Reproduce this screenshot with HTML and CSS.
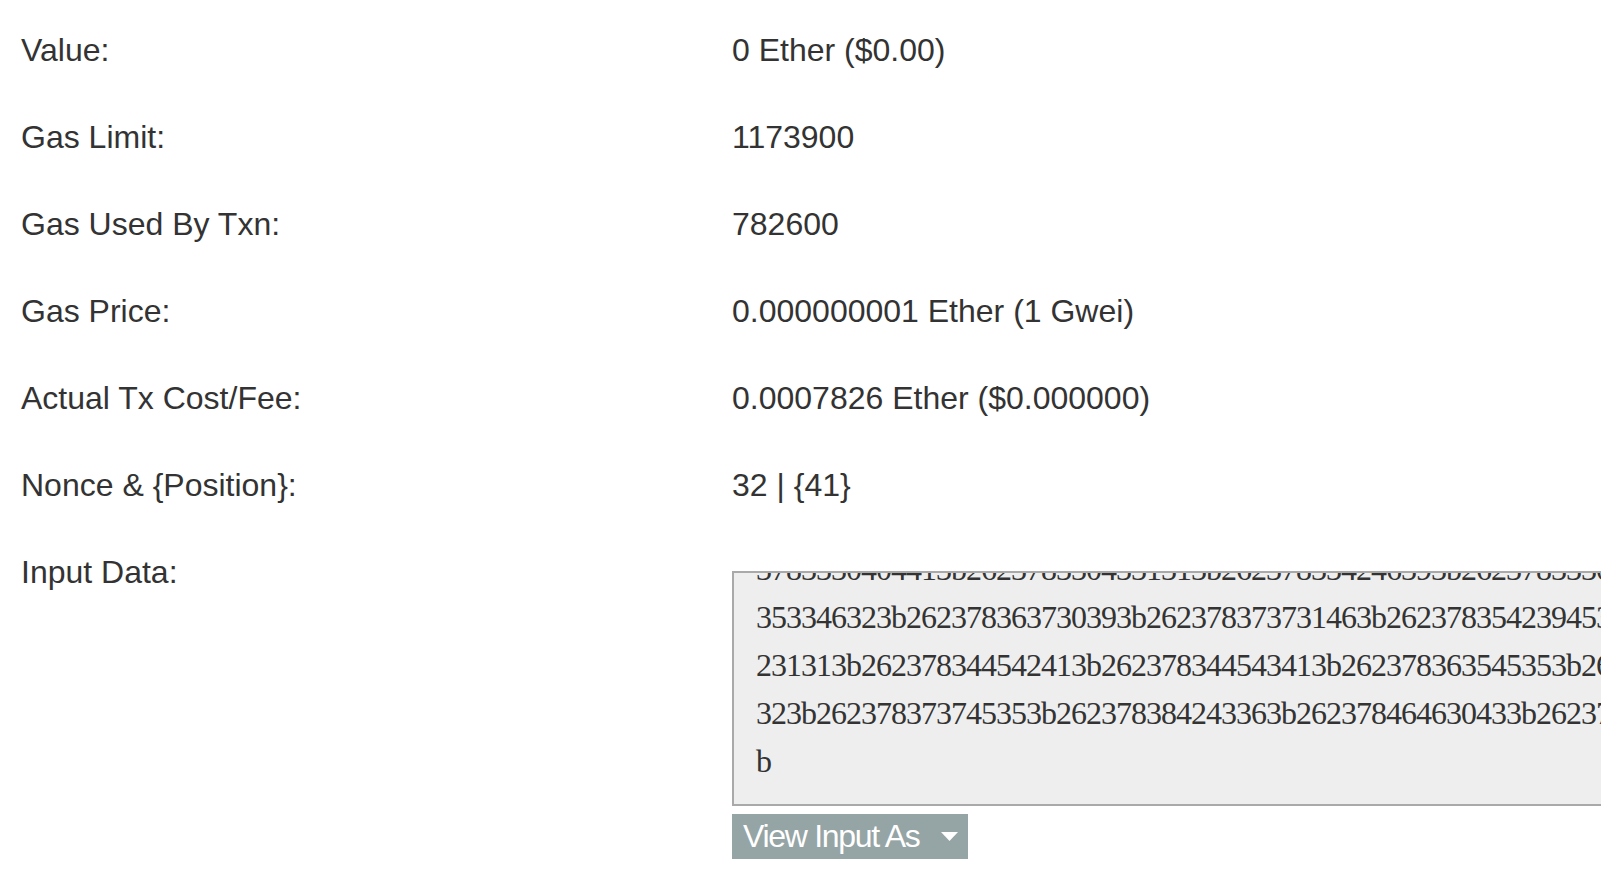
FILE: index.html
```html
<!DOCTYPE html>
<html lang="en">
<head>
    <meta charset="UTF-8">
    <title>Transaction Details</title>
    <link rel="stylesheet" href="styles.css">
</head>
<body>
    <div class="details">
        <div class="row">
            <div class="label">Value:</div>
            <div class="value">0 Ether ($0.00)</div>
        </div>
        <div class="row">
            <div class="label">Gas Limit:</div>
            <div class="value">1173900</div>
        </div>
        <div class="row">
            <div class="label">Gas Used By Txn:</div>
            <div class="value">782600</div>
        </div>
        <div class="row">
            <div class="label">Gas Price:</div>
            <div class="value">0.000000001 Ether (1 Gwei)</div>
        </div>
        <div class="row">
            <div class="label">Actual Tx Cost/Fee:</div>
            <div class="value">0.0007826 Ether ($0.000000)</div>
        </div>
        <div class="row">
            <div class="label">Nonce &amp; {Position}:</div>
            <div class="value">32 | {41}</div>
        </div>
        <div class="row">
            <div class="label">Input Data:</div>
            <div class="value">
                <div class="input-box">
                    <div class="input-text">
                        <div>3783330404413b2623783304331313b262378334246393b262378333040413b26237833333431</div>
                        <div>353346323b262378363730393b262378373731463b262378354239453b262378363935</div>
                        <div>231313b262378344542413b262378344543413b262378363545353b26237837303231</div>
                        <div>323b262378373745353b262378384243363b262378464630433b262378393833343b26</div>
                        <div>b</div>
                    </div>
                </div>
                <button class="view-btn">
                    View Input As
                    <svg class="caret" width="17" height="9" viewBox="0 0 17 9"><path d="M0 0h17L8.5 9z" fill="#fff"/></svg>
                </button>
            </div>
        </div>
    </div>
</body>
</html>
```

FILE: styles.css
```css
body {
    margin: 0;
    background: #fff;
    color: #333;
    font-family: "Liberation Sans", Arial, sans-serif;
    overflow: hidden;
}
.details {
    padding: 7px 0 0 21px;
}
.row {
    display: grid;
    grid-template-columns: 711px 1fr;
    padding: 22px 0;
    font-size: 32px;
    line-height: 43px;
}
.value {
    min-width: 0;
}
.input-box {
    margin-top: 20px;
    width: 1100px;
    height: 231px;
    overflow: hidden;
    background: #eeeeee;
    border: 2px solid #a9a9a9;
}
.input-text {
    margin-top: -28px;
    padding: 0 22px;
    font-family: "Liberation Serif", "Times New Roman", serif;
    font-size: 32px;
    line-height: 48px;
    letter-spacing: -1px;
    white-space: nowrap;
}
.view-btn {
    display: flex;
    align-items: center;
    gap: 22px;
    margin-top: 8px;
    height: 45px;
    padding: 0 10px 0 11px;
    background: #95a4a5;
    border: none;
    color: #fff;
    font-family: "Liberation Sans", Arial, sans-serif;
    font-size: 32px;
    letter-spacing: -1.3px;
    cursor: pointer;
}
.caret {
    display: block;
}
```
